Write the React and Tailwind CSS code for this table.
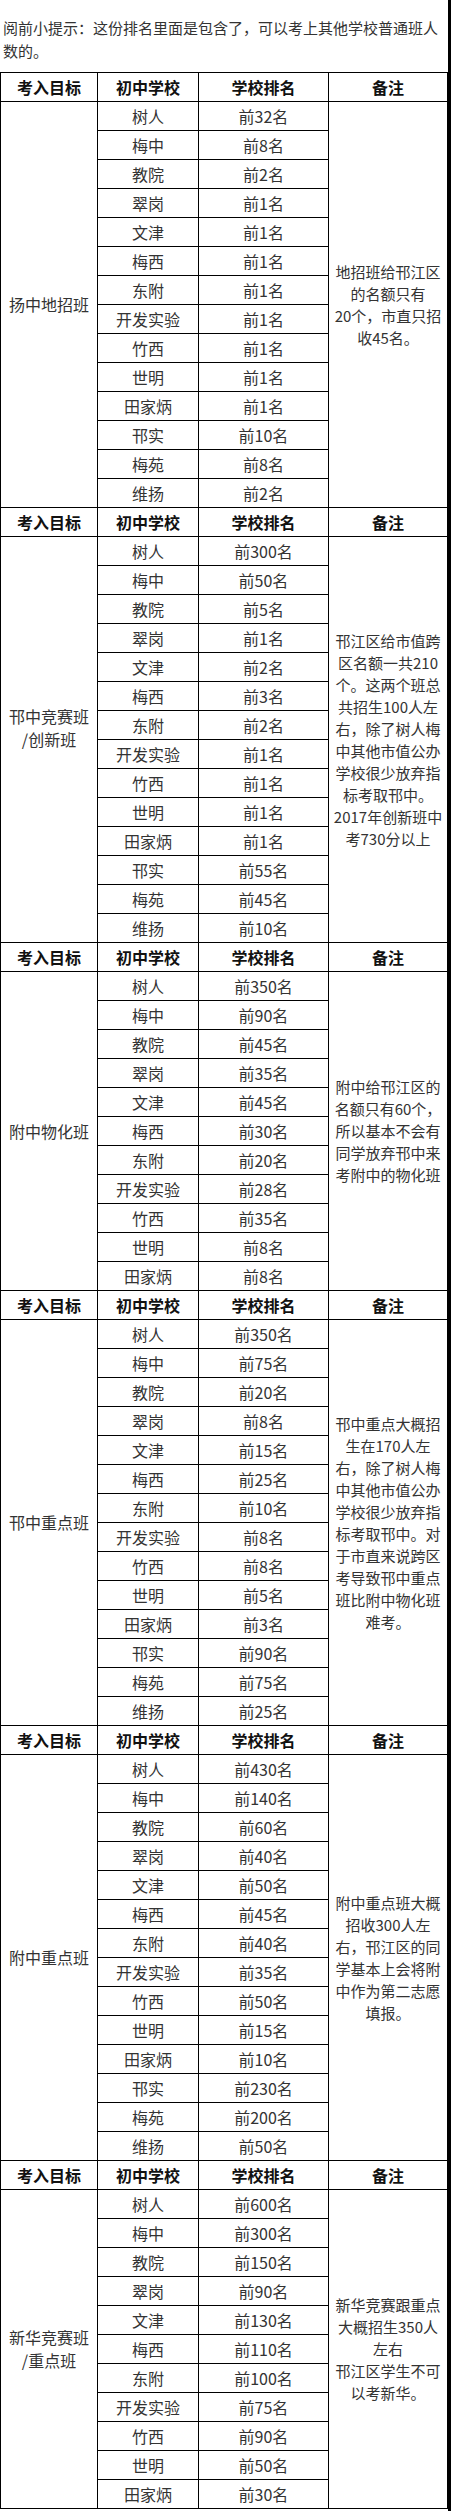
import React from "react";

const sections = [
  {
    label: ["扬中地招班"],
    rows: [
      ["树人", "前32名"], ["梅中", "前8名"], ["教院", "前2名"], ["翠岗", "前1名"],
      ["文津", "前1名"], ["梅西", "前1名"], ["东附", "前1名"], ["开发实验", "前1名"],
      ["竹西", "前1名"], ["世明", "前1名"], ["田家炳", "前1名"], ["邗实", "前10名"],
      ["梅苑", "前8名"], ["维扬", "前2名"],
    ],
    note: ["地招班给邗江区", "的名额只有", "20个，市直只招", "收45名。"],
  },
  {
    label: ["邗中竞赛班", "/创新班", ""],
    rows: [
      ["树人", "前300名"], ["梅中", "前50名"], ["教院", "前5名"], ["翠岗", "前1名"],
      ["文津", "前2名"], ["梅西", "前3名"], ["东附", "前2名"], ["开发实验", "前1名"],
      ["竹西", "前1名"], ["世明", "前1名"], ["田家炳", "前1名"], ["邗实", "前55名"],
      ["梅苑", "前45名"], ["维扬", "前10名"],
    ],
    note: [
      "邗江区给市值跨", "区名额一共210", "个。这两个班总", "共招生100人左", "右，除了树人梅",
      "中其他市值公办", "学校很少放弃指", "标考取邗中。", "2017年创新班中", "考730分以上",
    ],
  },
  {
    label: ["附中物化班"],
    rows: [
      ["树人", "前350名"], ["梅中", "前90名"], ["教院", "前45名"], ["翠岗", "前35名"],
      ["文津", "前45名"], ["梅西", "前30名"], ["东附", "前20名"], ["开发实验", "前28名"],
      ["竹西", "前35名"], ["世明", "前8名"], ["田家炳", "前8名"],
    ],
    note: ["附中给邗江区的", "名额只有60个，", "所以基本不会有", "同学放弃邗中来", "考附中的物化班"],
  },
  {
    label: ["邗中重点班"],
    rows: [
      ["树人", "前350名"], ["梅中", "前75名"], ["教院", "前20名"], ["翠岗", "前8名"],
      ["文津", "前15名"], ["梅西", "前25名"], ["东附", "前10名"], ["开发实验", "前8名"],
      ["竹西", "前8名"], ["世明", "前5名"], ["田家炳", "前3名"], ["邗实", "前90名"],
      ["梅苑", "前75名"], ["维扬", "前25名"],
    ],
    note: [
      "邗中重点大概招", "生在170人左", "右，除了树人梅", "中其他市值公办", "学校很少放弃指",
      "标考取邗中。对", "于市直来说跨区", "考导致邗中重点", "班比附中物化班", "难考。",
    ],
  },
  {
    label: ["附中重点班"],
    rows: [
      ["树人", "前430名"], ["梅中", "前140名"], ["教院", "前60名"], ["翠岗", "前40名"],
      ["文津", "前50名"], ["梅西", "前45名"], ["东附", "前40名"], ["开发实验", "前35名"],
      ["竹西", "前50名"], ["世明", "前15名"], ["田家炳", "前10名"], ["邗实", "前230名"],
      ["梅苑", "前200名"], ["维扬", "前50名"],
    ],
    note: ["附中重点班大概", "招收300人左", "右，邗江区的同", "学基本上会将附", "中作为第二志愿", "填报。"],
  },
  {
    label: ["新华竞赛班", "/重点班"],
    rows: [
      ["树人", "前600名"], ["梅中", "前300名"], ["教院", "前150名"], ["翠岗", "前90名"],
      ["文津", "前130名"], ["梅西", "前110名"], ["东附", "前100名"], ["开发实验", "前75名"],
      ["竹西", "前90名"], ["世明", "前50名"], ["田家炳", "前30名"],
    ],
    note: ["新华竞赛跟重点", "大概招生350人", "左右", "邗江区学生不可", "以考新华。"],
  },
];

function HeaderRow() {
  return (
    <div className="flex h-[29px] border-b border-black text-[16px] font-bold text-[#111]">
      <div className="w-[97px] border-r border-black flex items-center justify-center">考入目标</div>
      <div className="w-[101px] border-r border-black flex items-center justify-center">初中学校</div>
      <div className="w-[130px] border-r border-black flex items-center justify-center">学校排名</div>
      <div className="w-[119px] border-r border-black flex items-center justify-center">备注</div>
    </div>
  );
}

function Section({ s }) {
  return (
    <div>
      <HeaderRow />
      <div className="flex text-[#333]">
        <div className="w-[97px] border-r border-b border-black flex flex-col items-center justify-center text-center text-[16px] leading-[23px]">
          {s.label.map((l, i) =>
            l ? (
              <div key={i} className="whitespace-nowrap">{l}</div>
            ) : (
              <div key={i} className="h-[23px]" />
            )
          )}
        </div>
        <div className="w-[231px] flex flex-col">
          {s.rows.map((r, i) => (
            <div key={i} className="flex h-[29px] border-b border-black text-[16px]">
              <div className="w-[101px] border-r border-black flex items-center justify-center whitespace-nowrap">{r[0]}</div>
              <div className="w-[130px] border-r border-black flex items-center justify-center whitespace-nowrap">{r[1]}</div>
            </div>
          ))}
        </div>
        <div className="w-[119px] border-r border-b border-black flex flex-col items-center justify-center text-center text-[15px] leading-[22px]">
          {s.note.map((l, i) => (
            <div key={i} className="whitespace-nowrap">{l}</div>
          ))}
        </div>
      </div>
    </div>
  );
}

export default function App() {
  return (
    <div className="w-[452px] min-h-[2511px] bg-white font-['Noto_Sans_CJK_SC','Noto_Sans',sans-serif] flex">
      <div className="w-[448px]">
        <p className="pt-[16px] pl-[3px] pr-[6px] text-[15px] leading-[23px] text-[#333]">
          阅前小提示：这份排名里面是包含了，可以考上其他学校普通班人数的。
        </p>
        <div className="mt-[10px] w-[448px] border-l border-t border-black">
          {sections.map((s, i) => (
            <Section key={i} s={s} />
          ))}
        </div>
      </div>
      <div className="w-[3px] bg-black" />
      <div className="w-[1px]" />
    </div>
  );
}
